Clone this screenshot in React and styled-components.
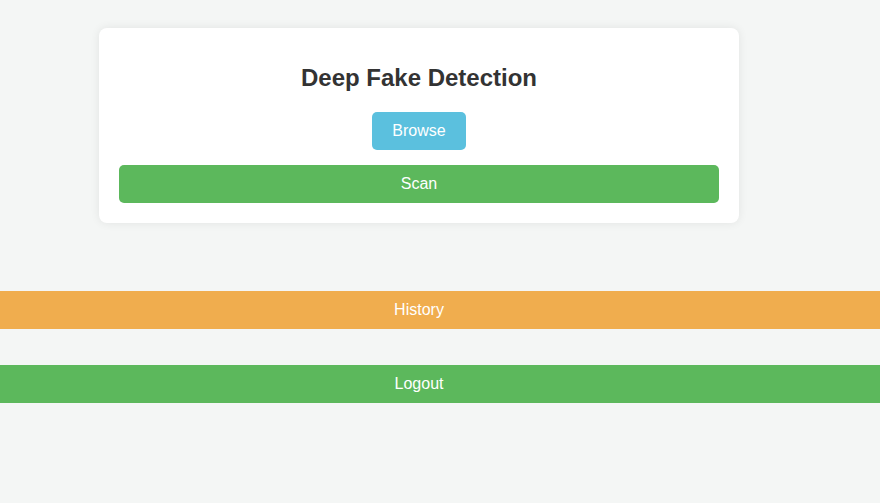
import styled, { createGlobalStyle } from 'styled-components'

const GlobalStyle = createGlobalStyle`
  html, body {
    margin: 0;
    padding: 0;
    background: #f4f6f5;
    font-family: "Liberation Sans", Arial, sans-serif;
    overflow: hidden;
  }
`

const Page = styled.div`
  width: 838px;
  padding-top: 28px;
`

const Card = styled.div`
  width: 640px;
  margin: 0 auto;
  box-sizing: border-box;
  padding: 20px;
  background: #fff;
  border-radius: 8px;
  box-shadow: 0 0 10px rgba(0, 0, 0, 0.08);
  display: flex;
  flex-direction: column;
  align-items: center;
`

const Title = styled.h2`
  margin: 17px 0 22px;
  font-size: 24px;
  line-height: 25px;
  font-weight: bold;
  color: #333;
`

const Button = styled.button`
  height: 38px;
  border: none;
  border-radius: 5px;
  background: ${({ color }) => color};
  color: #fff;
  font-family: inherit;
  font-size: 16px;
  padding: 0 20px;
  cursor: pointer;
  width: ${({ full }) => (full ? '100%' : 'auto')};
  margin-top: ${({ gap }) => gap || 0}px;
`

const Bar = styled.button`
  display: block;
  width: 880px;
  height: 38px;
  box-sizing: border-box;
  padding: 0 42px 0 0;
  border: none;
  border-radius: 0;
  background: ${({ color }) => color};
  color: #fff;
  font-family: inherit;
  font-size: 16px;
  text-align: center;
  cursor: pointer;
  margin-top: ${({ gap }) => gap}px;
`

export default function App() {
  return (
    <>
      <GlobalStyle />
      <Page>
        <Card>
          <Title>Deep Fake Detection</Title>
          <Button color="#5bc0de">Browse</Button>
          <Button color="#5cb85c" full gap={15}>
            Scan
          </Button>
        </Card>
        <Bar color="#f0ad4e" gap={68}>
          History
        </Bar>
        <Bar color="#5cb85c" gap={36}>
          Logout
        </Bar>
      </Page>
    </>
  )
}
